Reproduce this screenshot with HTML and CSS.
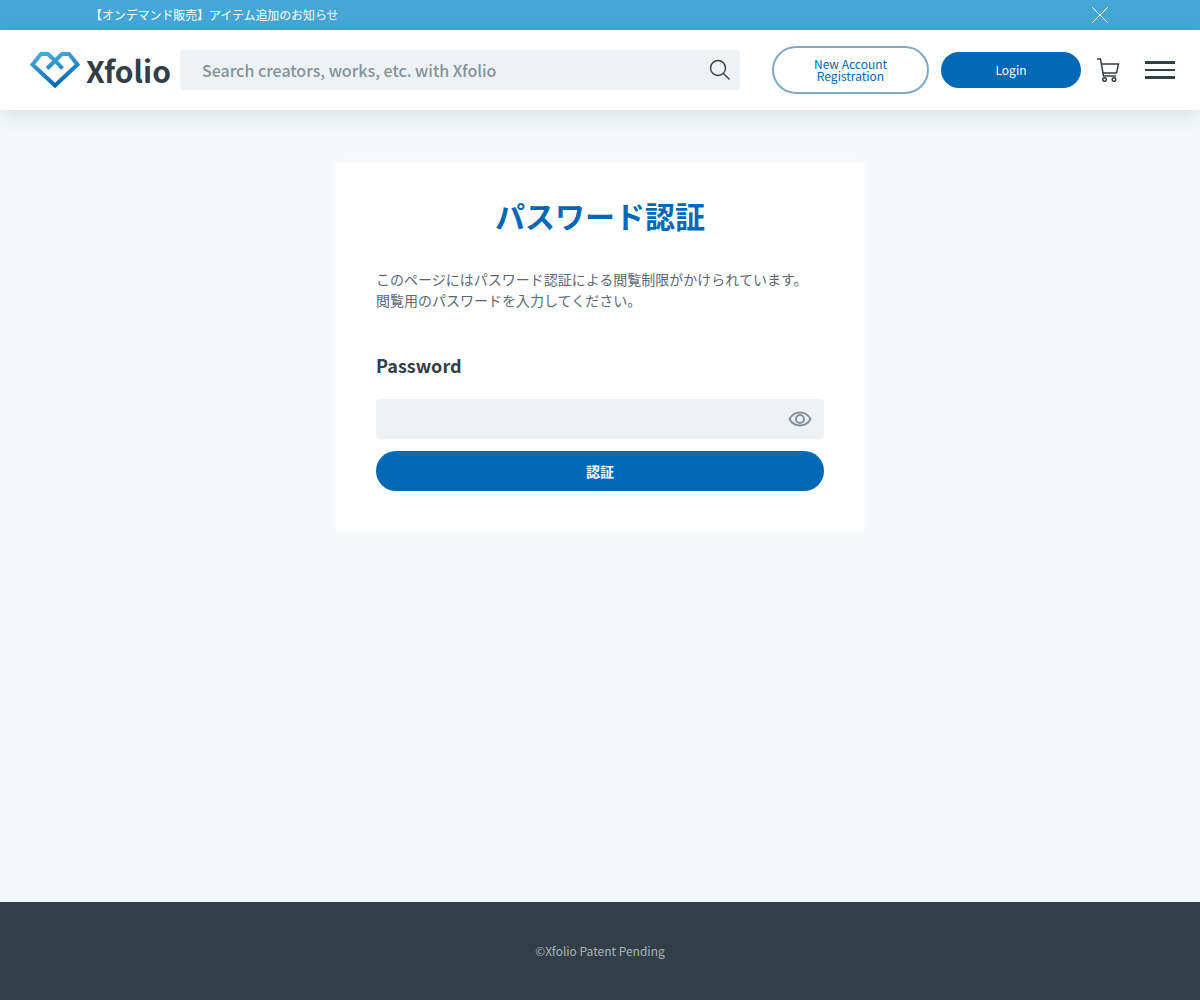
FILE: index.html
```html
<!DOCTYPE html>
<html lang="ja">
<head>
  <meta charset="UTF-8">
  <title>パスワード認証 - Xfolio</title>
  <link rel="stylesheet" href="styles.css">
</head>
<body>
  <div class="notice-bar">
    <a class="notice-text">【オンデマンド販売】アイテム追加のお知らせ</a>
    <svg class="notice-close" width="18" height="18" viewBox="0 0 18 18"><path d="M1 1L17 17M17 1L1 17" stroke="#fff" stroke-width="1" fill="none"/></svg>
  </div>

  <header class="site-header">
    <div class="logo">
      <svg class="logo-mark" width="50" height="38" viewBox="0 0 50 38">
        <defs>
          <linearGradient id="logoGrad" x1="0.3" y1="0" x2="0.6" y2="1">
            <stop offset="0" stop-color="#4aa8d8"/>
            <stop offset="1" stop-color="#0068b5"/>
          </linearGradient>
        </defs>
        <path d="M25 9.500L18 3H11L2.500 13.500L25 34.500L47.500 13.500L39 3H32L17 17.500M25 9.500L32.500 17.500" fill="none" stroke="url(#logoGrad)" stroke-width="4" stroke-linejoin="miter"/>
      </svg>
      <span class="logo-text">Xfolio</span>
    </div>
    <div class="search-box">
      <span class="search-placeholder">Search creators, works, etc. with Xfolio</span>
      <svg width="22" height="22" viewBox="0 0 22 22"><circle cx="9" cy="9" r="7.500" fill="none" stroke="#323e48" stroke-width="1.400"/><path d="M14.500 14.500L20.500 20.500" stroke="#323e48" stroke-width="1.400"/></svg>
    </div>
    <a class="register-button">New Account<br>Registration</a>
    <a class="login-button">Login</a>
    <svg class="cart-icon" width="24" height="24" viewBox="0 0 24 24"><path d="M1 1H4.500L7.500 18H20M5.500 6H22.500L20.500 15H7" fill="none" stroke="#323e48" stroke-width="1.500"/><circle cx="8.500" cy="21.500" r="1.800" fill="none" stroke="#323e48" stroke-width="1.500"/><circle cx="18" cy="21.500" r="1.800" fill="none" stroke="#323e48" stroke-width="1.500"/></svg>
    <div class="menu-icon"><span></span><span></span><span></span></div>
  </header>

  <main class="main-content">
    <section class="auth-card">
      <h1>パスワード認証</h1>
      <p class="auth-text">このページにはパスワード認証による閲覧制限がかけられています。<br>閲覧用のパスワードを入力してください。</p>
      <label class="field-label">Password</label>
      <div class="password-field">
        <svg width="24" height="16" viewBox="0 0 24 16"><path d="M1.500 8C4 3.500 8 1.500 12 1.500S20 3.500 22.500 8C20 12.500 16 14.500 12 14.500S4 12.500 1.500 8Z" fill="none" stroke="#84929c" stroke-width="2"/><circle cx="12" cy="8" r="4" fill="none" stroke="#84929c" stroke-width="2"/></svg>
      </div>
      <button class="submit-button">認証</button>
    </section>
  </main>

  <footer class="site-footer">©Xfolio Patent Pending</footer>
</body>
</html>
```

FILE: styles.css
```css
* {
  box-sizing: border-box;
}
html, body {
  height: 100%;
}
body {
  margin: 0;
  display: flex;
  flex-direction: column;
  min-height: 1000px;
  font-family: "Noto Sans CJK JP", "Noto Sans", sans-serif;
  color: #323e48;
  background-color: #f4f8fa;
}
.notice-bar {
  height: 30px;
  flex-shrink: 0;
  padding: 0 91px 0 90px;
  display: flex;
  align-items: center;
  justify-content: space-between;
  background-color: #45a7d8;
}
.notice-text {
  font-size: 12px;
  line-height: 18px;
  letter-spacing: -0.1px;
  color: white;
}
.site-header {
  position: relative;
  height: 80px;
  flex-shrink: 0;
  padding: 0 0 0 30px;
  display: flex;
  align-items: center;
  background-color: white;
  box-shadow: 0 4px 20px rgba(50, 62, 72, 0.14);
}
.logo {
  width: 150px;
  flex-shrink: 0;
  display: flex;
  align-items: center;
  gap: 6px;
}
.logo-mark {
  flex-shrink: 0;
}
.logo-text {
  font-size: 30px;
  font-weight: 700;
  line-height: 1;
  color: #323e48;
}
.search-box {
  width: 560px;
  height: 40px;
  flex-shrink: 0;
  padding: 0 9px 0 22px;
  display: flex;
  align-items: center;
  justify-content: space-between;
  background-color: #eef2f5;
  border-radius: 4px;
}
.search-placeholder {
  font-size: 16px;
  font-weight: 500;
  line-height: 20px;
  margin-top: -1px;
  color: #84929c;
}
.register-button {
  width: 157px;
  height: 48px;
  flex-shrink: 0;
  margin-left: 32px;
  display: flex;
  align-items: center;
  justify-content: center;
  text-align: center;
  font-size: 12px;
  line-height: 12px;
  color: #0068b5;
  background-color: white;
  border: 2px solid #7eaac8;
  border-radius: 24px;
}
.login-button {
  width: 140px;
  height: 36px;
  flex-shrink: 0;
  margin-left: 12px;
  padding-bottom: 2px;
  display: flex;
  align-items: center;
  justify-content: center;
  font-size: 12px;
  color: white;
  background-color: #0068b5;
  border-radius: 18px;
}
.cart-icon {
  flex-shrink: 0;
  margin-left: 15px;
}
.menu-icon {
  flex-shrink: 0;
  margin-left: 25px;
  width: 30px;
  display: flex;
  flex-direction: column;
  gap: 5px;
}
.menu-icon span {
  height: 2.500px;
  background-color: #323e48;
}
.main-content {
  flex-grow: 1;
  padding-top: 53px;
}
.auth-card {
  width: 528px;
  height: 368px;
  margin: 0 auto;
  padding: 28px 40px 0;
  background-color: white;
  box-shadow: 0 0 10px rgba(255, 255, 255, 0.9);
}
.auth-card h1 {
  margin: 0;
  text-align: center;
  font-size: 30px;
  font-weight: 700;
  line-height: 48px;
  color: #0068b5;
}
.auth-text {
  margin: 30px 0 0;
  font-size: 14px;
  line-height: 21px;
  color: #5b6873;
}
.field-label {
  display: block;
  margin-top: 40px;
  font-size: 18px;
  font-weight: 700;
  line-height: 28px;
  color: #323e48;
}
.password-field {
  height: 40px;
  margin-top: 20px;
  padding-right: 12px;
  display: flex;
  align-items: center;
  justify-content: flex-end;
  background-color: #eef2f5;
  border-radius: 4px;
}
.submit-button {
  display: block;
  width: 100%;
  height: 40px;
  margin-top: 12px;
  font-family: inherit;
  font-size: 14px;
  font-weight: 700;
  color: white;
  background-color: #0068b5;
  border: none;
  border-radius: 20px;
}
.site-footer {
  height: 98px;
  flex-shrink: 0;
  padding-top: 40px;
  text-align: center;
  font-size: 12px;
  line-height: 18px;
  color: #a9b3ba;
  background-color: #323e48;
}
```
